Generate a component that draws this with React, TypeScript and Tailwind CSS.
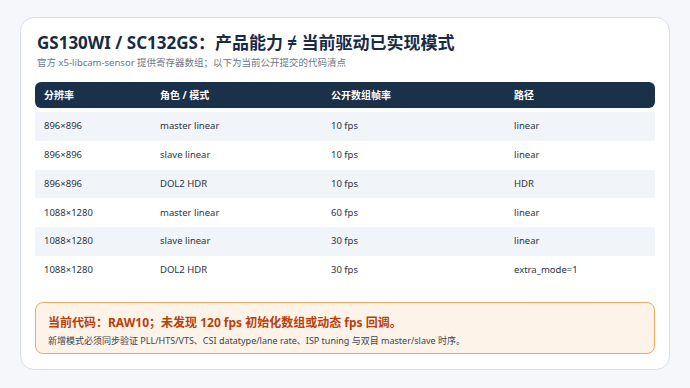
const rows = [
  { res: "896×896", role: "master linear", fps: "10 fps", path: "linear" },
  { res: "896×896", role: "slave linear", fps: "10 fps", path: "linear" },
  { res: "896×896", role: "DOL2 HDR", fps: "10 fps", path: "HDR" },
  { res: "1088×1280", role: "master linear", fps: "60 fps", path: "linear" },
  { res: "1088×1280", role: "slave linear", fps: "30 fps", path: "linear" },
  { res: "1088×1280", role: "DOL2 HDR", fps: "30 fps", path: "extra_mode=1" },
];

const cols = "grid grid-cols-[116px_171px_183px_1fr]";

export default function App() {
  return (
    <div
      className="w-[690px] h-[388px] bg-[#f5f7fb] pt-[17px] px-[20px]"
      style={{ fontFamily: '"Noto Sans", "Noto Sans CJK SC", sans-serif' }}
    >
      <div className="h-[353px] rounded-[14px] border border-[#d6e0ec] bg-white px-[14px] pt-[12px]">
        <h1 className="pl-[2px] text-[17px] font-bold leading-[26px] text-[#172b45]">
          GS130WI / SC132GS：产品能力 ≠ 当前驱动已实现模式
        </h1>
        <p className="pl-[2px] text-[9.5px] leading-[14px] text-[#6b7788]">
          官方 x5-libcam-sensor 提供寄存器数组；以下为当前公开提交的代码清点
        </p>

        <div className="mt-[12px]">
          <div className={`${cols} h-[26px] items-center rounded-[6px] bg-[#1b3049] text-[10px] font-bold text-white`}>
            <div className="pl-[9px]">分辨率</div>
            <div className="pl-[9px]">角色 / 模式</div>
            <div className="pl-[9px]">公开数组帧率</div>
            <div className="pl-[9px]">路径</div>
          </div>
          <div className="mt-[4px]">
            {rows.map((r, i) => (
              <div
                key={i}
                className={`${cols} h-[28.8px] items-center text-[9.5px] text-[#2b3442] ${
                  i % 2 === 0 ? "bg-[#f1f5fa]" : "bg-white"
                }`}
              >
                <div className="pl-[9px]">{r.res}</div>
                <div className="pl-[9px]">{r.role}</div>
                <div className="pl-[9px]">{r.fps}</div>
                <div className="pl-[9px]">{r.path}</div>
              </div>
            ))}
          </div>
        </div>

        <div className="mt-[17px] h-[52px] rounded-[8px] border border-[#eea866] bg-[#fdf3e8] px-[12px] pt-[12px]">
          <div className="text-[12px] font-bold leading-[16px] text-[#b8400d]">
            当前代码：RAW10；未发现 120 fps 初始化数组或动态 fps 回调。
          </div>
          <div className="mt-[3px] text-[9px] leading-[13px] text-[#3b4350]">
            新增模式必须同步验证 PLL/HTS/VTS、CSI datatype/lane rate、ISP tuning 与双目 master/slave 时序。
          </div>
        </div>
      </div>
    </div>
  );
}
